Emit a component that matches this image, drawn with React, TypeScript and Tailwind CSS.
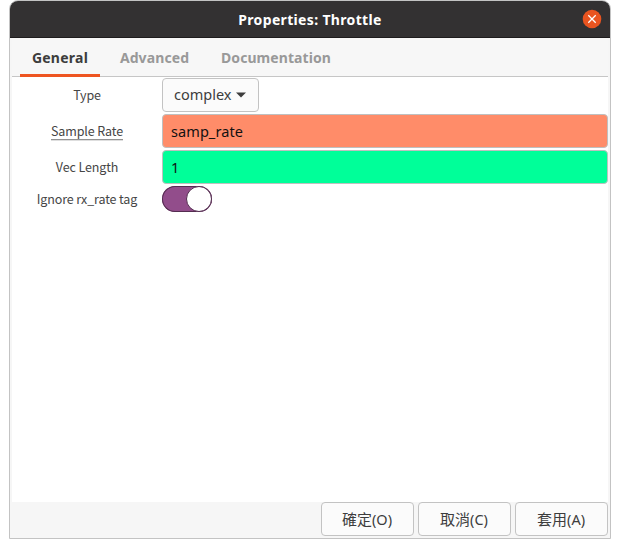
import type { ReactNode } from 'react';

const ui = "font-['Noto_Sans','Noto_Sans_CJK_TC',sans-serif]";
const cjk = "font-['Noto_Sans_CJK_TC',sans-serif]";

function Row({ label, height, children }: { label: ReactNode; height: string; children: ReactNode }) {
  return (
    <div className={`flex items-center ${height}`}>
      <div className={`w-[150px] shrink-0 text-center text-[12.5px] leading-[20px] tracking-[-0.12px] text-[#464646] ${cjk}`}>{label}</div>
      {children}
    </div>
  );
}

function DialogButton({ text, letter }: { text: string; letter: string }) {
  return (
    <button className={`flex h-[34px] w-[93px] items-center justify-center rounded-[4px] border border-[#c3c3c3] bg-[#fbfbfb] pr-px pb-px text-[15px] leading-[20px] text-[#3d3d3d] ${cjk}`}>
      {text}
      <span className={`text-[14.5px] ${ui}`}>({letter})</span>
    </button>
  );
}

export default function App() {
  return (
    <div className={`h-[548px] w-[620px] overflow-hidden bg-white pl-[9px] ${ui}`}>
      <div className="flex h-[539px] w-[602px] flex-col overflow-hidden rounded-t-[9px] border border-[#c3c3c3] bg-[#f6f6f6]">
        <header className="grid h-[37px] shrink-0 grid-cols-[1fr_auto_1fr] items-center border-b border-[#1e1c1d] bg-[#333132]">
          <span />
          <h1 className="pt-px text-[14px] leading-[20px] font-bold tracking-[0.34px] text-white">Properties: Throttle</h1>
          <button aria-label="Close" className="mr-[8px] justify-self-end">
            <svg width="20" height="20" viewBox="0 0 20 20" className="block">
              <circle cx="10" cy="10" r="9.3" fill="#e95420" />
              <path d="M6.3 6.3l7.4 7.4M13.7 6.3l-7.4 7.4" stroke="#fff" strokeWidth="1.3" />
            </svg>
          </button>
        </header>

        <nav className="mx-[2px] flex h-[39px] shrink-0 border-b border-[#c6c6c6] bg-[#f7f7f7] pl-[8px] text-[14px] leading-[20px] font-bold text-[#999]">
          <div className="h-[39px] w-[80px] border-b-[3px] border-[#ee5521] pt-[10px] text-center tracking-[0.25px] text-[#3d3d3d]">General</div>
          <div className="w-[109px] pt-[10px] text-center tracking-[0.1px]">Advanced</div>
          <div className="w-[134px] pt-[10px] text-center tracking-[0.08px]">Documentation</div>
        </nav>

        <main className="mx-[2px] flex flex-1 flex-col gap-[2px] bg-white pt-px">
          <Row label="Type" height="h-[34px]">
            <button className="flex h-[34px] w-[97px] items-center gap-[4px] rounded-[4px] border border-[#c3c3c3] bg-[#fbfbfb] pb-[2px] pl-[11px] text-[14.5px] leading-[20px] text-[#3d3d3d]">
              complex
              <svg width="10" height="6" viewBox="0 0 10 6" className="mt-[2px] shrink-0">
                <path d="M0 0.5h10L5 5.5z" fill="#3d3d3d" />
              </svg>
            </button>
          </Row>
          <Row label={<span className="inline-block h-[18px] border-b border-[#929292] leading-[18px] shadow-[0_1px_0_#dedede]">Sample Rate</span>} height="h-[34px]">
            <div className="h-[34px] w-[446px] rounded-[4px] border border-[#bfc0c0] bg-[#ff8c69] pt-[6px] pl-[8px] text-[14.5px] leading-[20px] tracking-[0.08px] text-[#111]">samp_rate</div>
          </Row>
          <Row label="Vec Length" height="h-[34px]">
            <div className="h-[34px] w-[446px] rounded-[4px] border border-[#bfc0c0] bg-[#00ff99] pt-[6px] pl-[8px] text-[14.5px] leading-[20px] text-[#111]">1</div>
          </Row>
          <Row label="Ignore rx_rate tag" height="h-[26px]">
            <div className="flex h-[26px] w-[50px] justify-end rounded-full bg-[#924d8b] ring-1 ring-[#542c50] ring-inset">
              <div className="h-[26px] w-[26px] rounded-full border border-[#542c50] bg-white" />
            </div>
          </Row>
        </main>

        <footer className="flex h-[36px] shrink-0 justify-end gap-[4px] pr-[2px]">
          <DialogButton text="確定" letter="O" />
          <DialogButton text="取消" letter="C" />
          <DialogButton text="套用" letter="A" />
        </footer>
      </div>
    </div>
  );
}
